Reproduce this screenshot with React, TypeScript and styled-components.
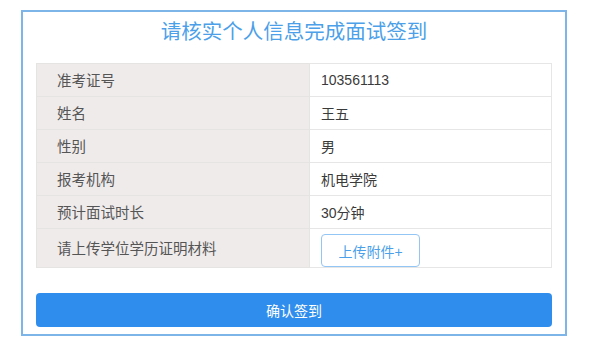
import React from 'react';
import styled, { createGlobalStyle } from 'styled-components';

const GlobalStyle = createGlobalStyle`
  body {
    margin: 0;
    background: #ffffff;
    font-family: "Liberation Sans", "Noto Sans CJK SC", sans-serif;
  }
`;

const Page = styled.div`
  padding: 10px 22px 8px 21px;
`;

const Card = styled.div`
  box-sizing: border-box;
  width: 546px;
  height: 326px;
  border: 2px solid #7db5e9;
  padding: 0 13px 7px;
  display: flex;
  flex-direction: column;
`;

const Title = styled.h2`
  margin: 0;
  height: 40px;
  line-height: 40px;
  text-align: center;
  font-size: 20.5px;
  font-weight: 400;
  color: #4c9fe9;
`;

const InfoTable = styled.table`
  margin-top: 11px;
  width: 100%;
  border-collapse: collapse;
  font-size: 14px;
`;

const Row = styled.tr<{ $tall?: boolean }>`
  height: ${p => (p.$tall ? 38 : 33)}px;
`;

const Label = styled.td`
  box-sizing: border-box;
  width: 273px;
  border: 1px solid #e6e3e3;
  background: #efebeb;
  color: #555555;
  padding: 0 0 1px 20px;
  font-size: 14.5px;
`;

const Value = styled.td<{ $top?: boolean }>`
  border: 1px solid #e6e6e6;
  color: #3a3a3a;
  padding: ${p => (p.$top ? '5px 0 0 11px' : '0 0 1px 11px')};
  vertical-align: ${p => (p.$top ? 'top' : 'middle')};
`;

const UploadButton = styled.button`
  box-sizing: border-box;
  width: 99px;
  height: 33px;
  border: 1px solid #93c5f5;
  border-radius: 4px;
  background: #ffffff;
  color: #4c9fe9;
  font-family: inherit;
  font-size: 14px;
  cursor: pointer;
  display: block;
`;

const Spacer = styled.div`
  flex: 1;
`;

const SubmitButton = styled.button`
  width: 100%;
  height: 34px;
  border: none;
  border-radius: 4px;
  background: #2f8ded;
  color: #ffffff;
  font-family: inherit;
  font-size: 14px;
  cursor: pointer;
`;

const rows = [
  { label: '准考证号', value: '103561113' },
  { label: '姓名', value: '王五' },
  { label: '性别', value: '男' },
  { label: '报考机构', value: '机电学院' },
  { label: '预计面试时长', value: '30分钟' },
];

export default function App() {
  return (
    <>
      <GlobalStyle />
      <Page>
        <Card>
          <Title>请核实个人信息完成面试签到</Title>
          <InfoTable>
            <tbody>
              {rows.map(r => (
                <Row key={r.label}>
                  <Label>{r.label}</Label>
                  <Value>{r.value}</Value>
                </Row>
              ))}
              <Row $tall>
                <Label>请上传学位学历证明材料</Label>
                <Value $top>
                  <UploadButton>上传附件+</UploadButton>
                </Value>
              </Row>
            </tbody>
          </InfoTable>
          <Spacer />
          <SubmitButton>确认签到</SubmitButton>
        </Card>
      </Page>
    </>
  );
}
